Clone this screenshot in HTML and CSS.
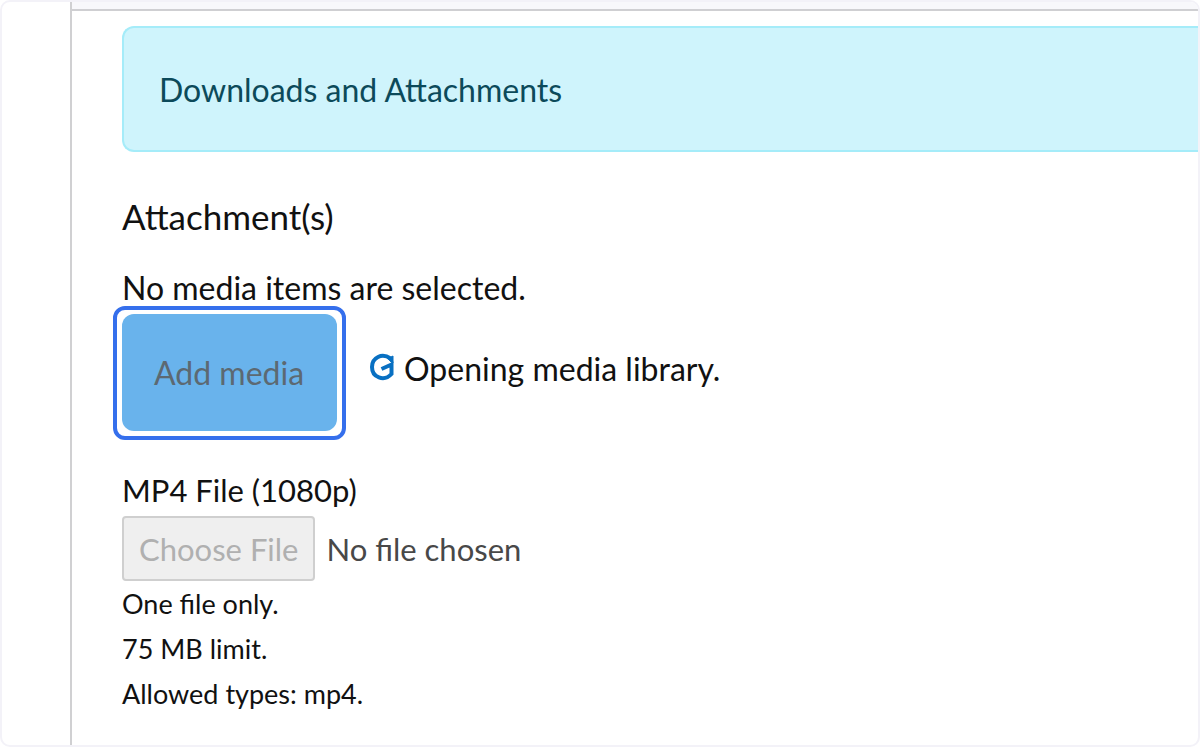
FILE: index.html
```
<!DOCTYPE html>
<html lang="en">

<head>
    <meta charset="utf-8">
    <title>Downloads and Attachments</title>
    <link rel="stylesheet" href="styles.css">
</head>

<body>
    <div class="page">
        <div class="sidebar"></div>
        <div class="content">
            <div class="topbar"></div>
            <main class="main">
                <div class="alert">Downloads and Attachments</div>

                <section class="attachments">
                    <div class="title">Attachment(s)</div>
                    <p class="empty">No media items are selected.</p>
                    <div class="media-row">
                        <button type="button" class="add-media" disabled>Add media</button>
                        <div class="progress">
                            <svg class="throbber" viewBox="0 0 26 28" aria-hidden="true">
                                <path d="M20.5 5.5C12 -0.5 2 4.5 2 14C2 24.5 14 29 21.5 21V11.5L11.5 16" />
                                <path d="M15.5 3L21.5 9.5L23 10V3L20 4.5Z" stroke-width="1" fill="#0870c2" />
                            </svg>
                            <span>Opening media library.</span>
                        </div>
                    </div>
                </section>

                <section class="upload">
                    <label for="mp4File">MP4 File (1080p)</label>
                    <input type="file" id="mp4File" accept=".mp4" disabled>
                    <div class="description">
                        <div>One file only.</div>
                        <div>75 MB limit.</div>
                        <div>Allowed types: mp4.</div>
                    </div>
                </section>
            </main>
        </div>
    </div>
</body>

</html>
```
FILE: styles.css
```
* {
    box-sizing: border-box;
}

body {
    margin: 0;
    font-family: Lato, "Noto Sans", sans-serif;
    font-size: 32px;
    line-height: 48px;
    color: #111;
    background-color: #fff;
}

.page {
    display: flex;
    min-height: 100vh;
    border: 2px solid #f3f2f8;
    border-radius: 10px;
    overflow: hidden;
}

.sidebar {
    flex: 0 0 70px;
    border-right: 2px solid #d0d0d2;
}

.content {
    flex: 1;
}

.topbar {
    height: 9px;
    background-color: #f8f8fb;
    border-bottom: 2px solid #cfcfd2;
}

.main {
    padding: 15px 0 0 50px;
}

.alert {
    padding: 38px 35px 36px;
    color: #0c4a5a;
    background-color: #cff4fc;
    border: 2px solid #a5ecf9;
    border-right: none;
    border-radius: 12px 0 0 12px;
}

.attachments {
    margin-top: 40px;
}

.title {
    font-size: 35px;
}

.empty {
    margin: 24px 0 0;
}

.media-row {
    display: flex;
    align-items: center;
    gap: 33px;
    margin-top: 2px;
}

button,
input {
    font: inherit;
}

.add-media {
    position: relative;
    padding: 35px 33px 34px 32px;
    color: #5c6972;
    background-color: #69b3ec;
    border: none;
    border-radius: 12px;
}

/* Focus ring */
.add-media::after {
    content: "";
    position: absolute;
    inset: -8px -9px -9px;
    border: 4px solid #356fec;
    border-radius: 12px;
}

.progress {
    display: flex;
    align-items: center;
    gap: 8px;
    padding-bottom: 8px;
}

.throbber {
    width: 26px;
    height: 28px;
    margin-bottom: 4px;
    fill: none;
    stroke: #0870c2;
    stroke-width: 4;
}

.upload {
    margin-top: 35px;
    font-size: 31px;
}

.upload label {
    display: block;
}

.upload input {
    display: block;
    margin-top: 2px;
    color: #484848;
}

.upload input::file-selector-button {
    margin-right: 11px;
    padding: 7px 15px 6px;
    font: inherit;
    color: #b0b0b0;
    background-color: #efefef;
    border: 2px solid #cfcfcf;
    border-radius: 4px;
}

.description {
    font-size: 27px;
    line-height: 45px;
}
```
